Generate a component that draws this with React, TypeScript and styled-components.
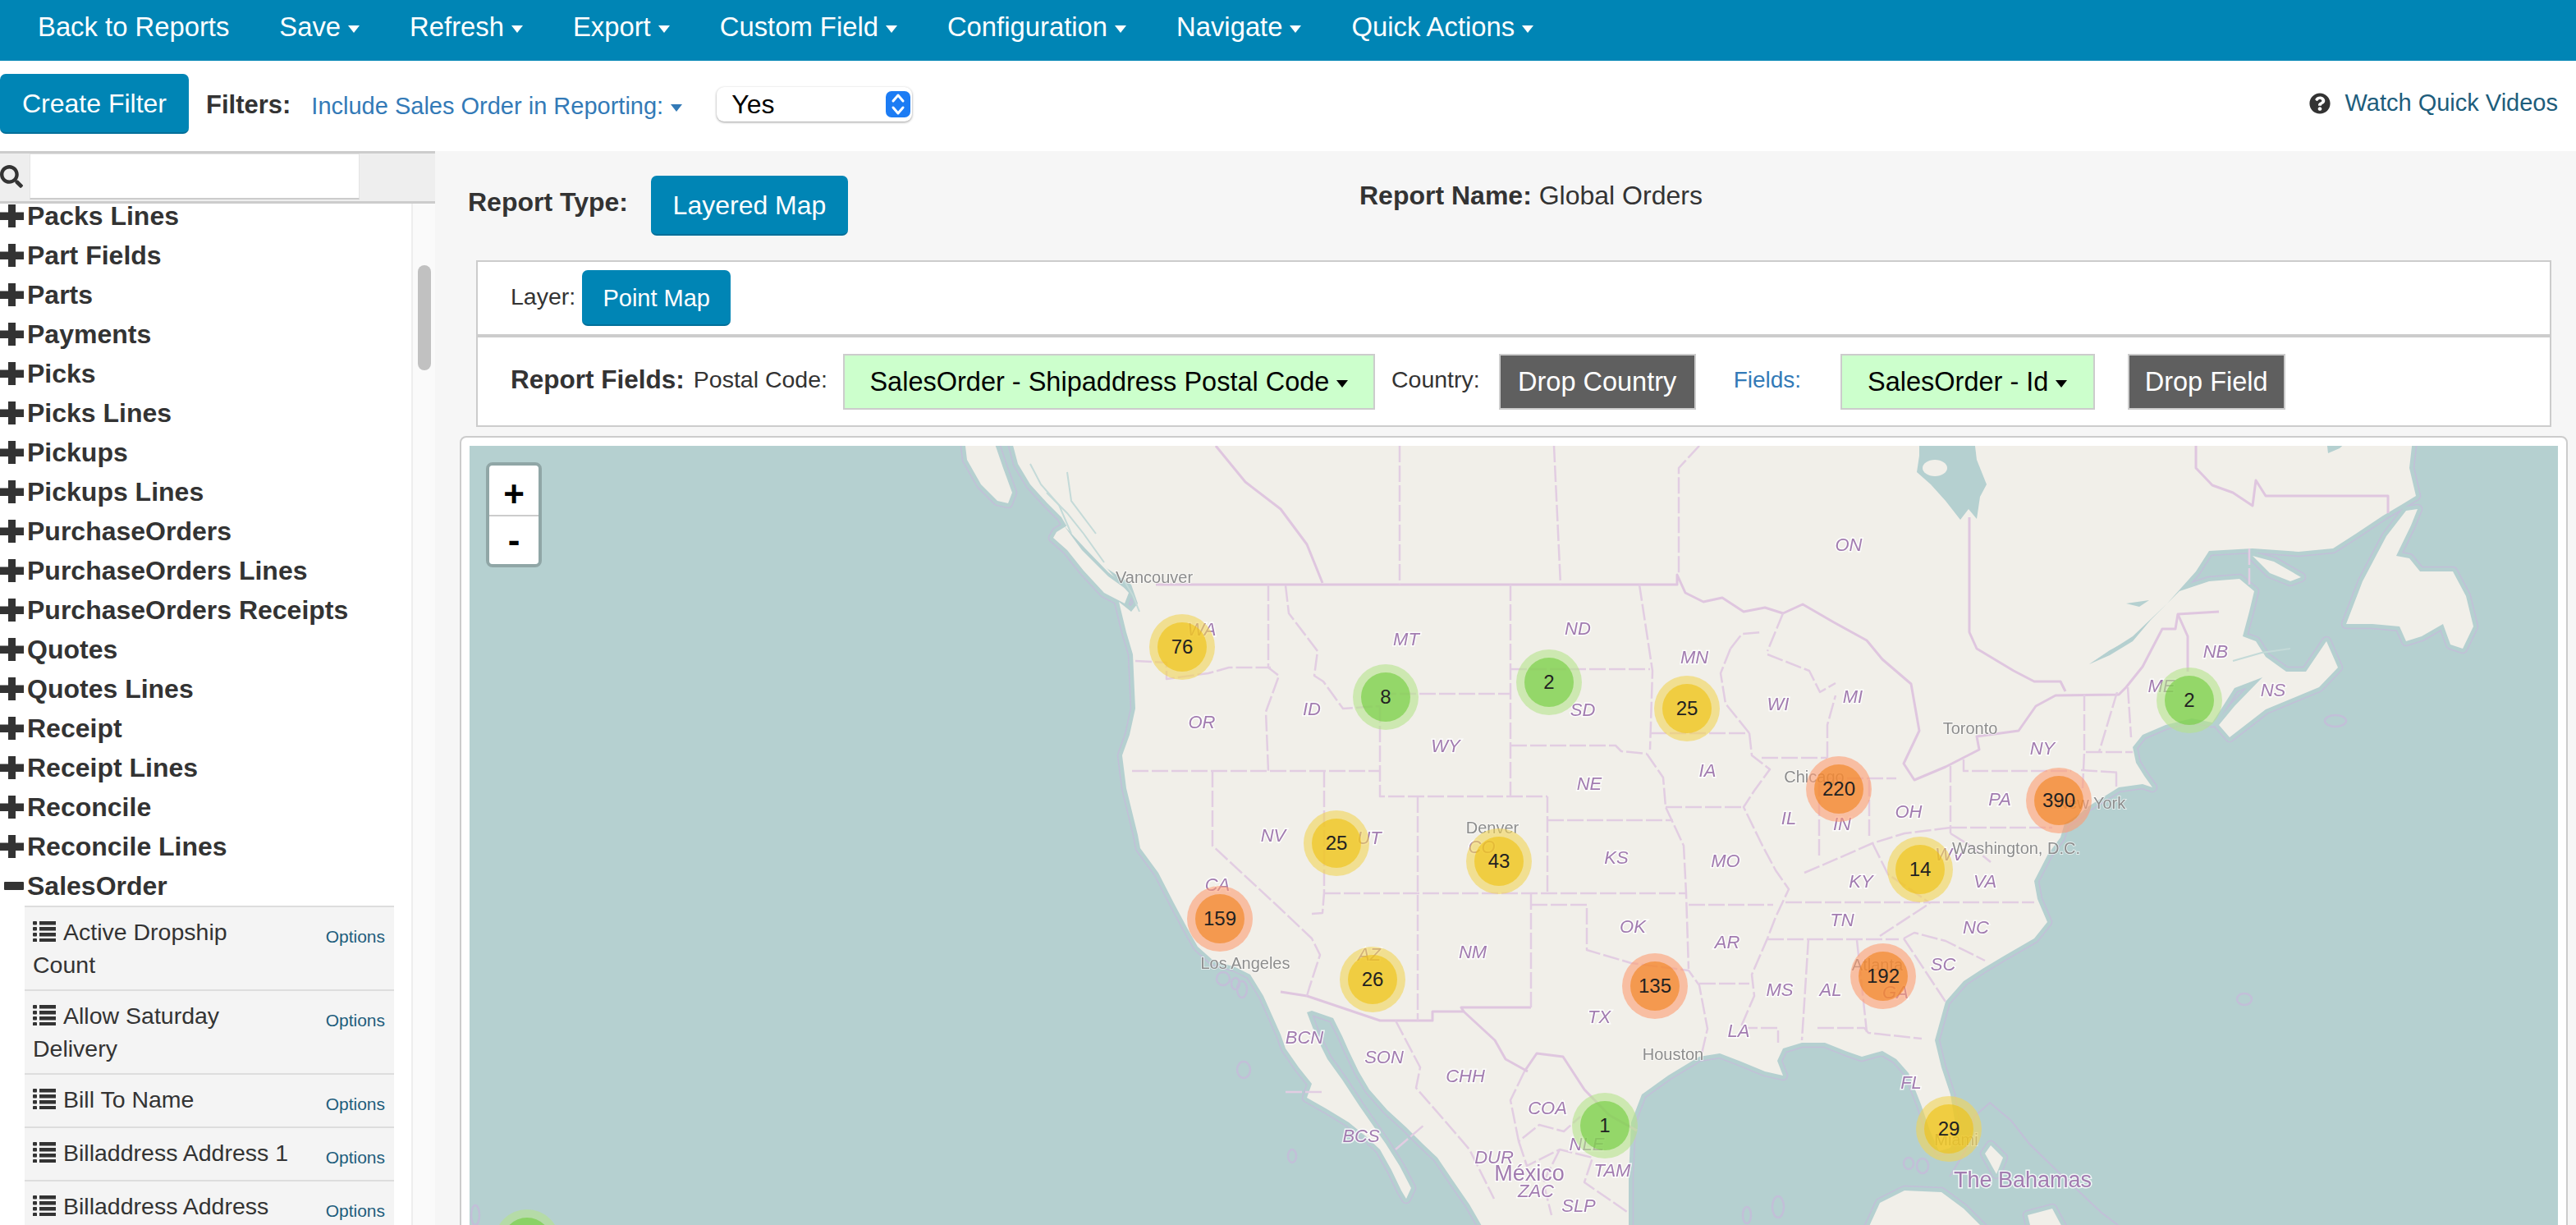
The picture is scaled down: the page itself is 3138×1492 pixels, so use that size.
import React from 'react';
import styled, { createGlobalStyle } from 'styled-components';
import { FaQuestionCircle, FaSearch } from 'react-icons/fa';

const FONT = '"Liberation Sans", Arial, sans-serif';
const BLUE = '#0085b5';

const GlobalStyle = createGlobalStyle`
  html, body {
    margin: 0;
    padding: 0;
    background: #fff;
  }
  body {
    font-family: ${FONT};
    color: #333;
  }
`;

/* map data, in page pixels (viewBox starts at the map corner) */

const LAND = [
  'M1232 500 L1232 535 L1240 565 L1255 590 L1275 612 L1293 630 L1305 650 L1330 680 L1360 700 L1378 712 L1386 735 L1378 745 L1363 733 L1372 770 L1380 797 L1383 863 L1376 895 L1367 920 L1372 960 L1386 1017 L1389 1033 L1411 1063 L1430 1100 L1446 1130 L1459 1153 L1478 1170 L1505 1178 L1523 1187 L1539 1213 L1560 1260 L1566 1277 L1582 1300 L1598 1320 L1592 1337 L1615 1350 L1643 1367 L1665 1385 L1681 1400 L1695 1425 L1707 1450 L1713 1460 L1719 1447 L1705 1420 L1688 1393 L1672 1370 L1656 1347 L1635 1315 L1617 1290 L1603 1262 L1592 1233 L1598 1231 L1624 1240 L1635 1262 L1643 1280 L1655 1305 L1668 1327 L1690 1352 L1713 1373 L1733 1393 L1751 1410 L1770 1438 L1790 1467 L1809 1500 L1984 1500 L1984 1433 L1987 1367 L2000 1333 L2032 1310 L2070 1287 L2095 1283 L2121 1293 L2150 1305 L2172 1310 L2165 1292 L2172 1277 L2195 1270 L2223 1270 L2248 1280 L2268 1287 L2293 1280 L2310 1290 L2325 1307 L2340 1345 L2351 1377 L2362 1402 L2376 1398 L2382 1370 L2376 1333 L2365 1300 L2357 1267 L2370 1220 L2392 1195 L2415 1180 L2440 1165 L2478 1143 L2494 1123 L2482 1095 L2478 1073 L2495 1040 L2510 1020 L2515 1003 L2535 990 L2541 984 L2581 959 L2610 955 L2622 959 L2612 945 L2602 929 L2598 910 L2610 895 L2638 883 L2670 875 L2695 880 L2708 860 L2722 838 L2756 825 L2722 860 L2703 883 L2716 898 L2760 864 L2825 837 L2848 813 L2834 781 L2809 818 L2785 818 L2760 800 L2748 781 L2732 775 L2740 745 L2746 720 L2728 705 L2691 708 L2655 720 L2620 755 L2598 781 L2570 798 L2545 809 L2598 775 L2640 735 L2675 696 L2691 671 L2744 668 L2800 672 L2842 668 L2870 650 L2903 628 L2925 615 L2943 604 L2935 570 L2939 535 L2939 500 Z',
  'M1175 535 L1178 560 L1195 590 L1215 610 L1228 613 L1233 600 L1222 570 L1210 535 Z',
  'M1287 648 L1300 640 L1330 670 L1355 700 L1375 722 L1370 735 L1345 722 L1320 695 L1300 670 L1283 655 Z',
  'M2931 622 L2945 620 L2937 640 L2919 677 L2935 680 L2948 696 L2988 696 L3004 726 L3013 763 L3000 790 L2985 785 L2976 760 L2950 775 L2931 781 L2923 763 L2890 760 L2858 760 L2878 708 L2907 653 Z',
  'M2744 677 L2770 684 L2803 703 L2790 708 L2765 698 Z',
  'M2274 1500 L2290 1465 L2320 1450 L2365 1452 L2392 1472 L2420 1500 Z',
  'M2425 1395 L2440 1410 L2432 1430 L2418 1405 Z',
  'M2470 1480 L2500 1472 L2515 1500 L2475 1500 Z',
];

const ISLETS: [number, number, number, number][] = [
  [2166, 1470, 7, 13], [2128, 1480, 5, 10], [1574, 1408, 5, 8], [1515, 1303, 8, 10],
  [1490, 1192, 8, 8], [1505, 1198, 5, 7], [1513, 1205, 6, 10], [2734, 1217, 9, 7],
  [2845, 878, 13, 7], [579, 1480, 5, 12], [2325, 1417, 6, 7], [2342, 1420, 7, 9],
];

const WATER_PATCHES = [
  'M2338 535 L2338 555 L2335 575 L2352 590 L2370 610 L2388 633 L2398 620 L2408 632 L2412 605 L2420 590 L2408 560 L2405 535 Z',
  'M2834 535 L2836 552 L2850 546 L2862 535 Z',
  'M2590 735 L2618 731 L2606 739 Z',
  'M2545 809 L2570 795 L2598 777 L2570 792 Z',
  'M1296 640 L1322 668 L1350 697 L1372 714 L1378 722 L1350 702 L1318 670 Z',
];

const FJORDS = [
  'M1255 565 L1268 590 L1290 615 L1305 650',
  'M1275 600 L1300 625 L1320 650 L1345 685',
  'M1300 575 L1305 610 L1335 650',
  'M1368 705 L1380 725 L1388 745',
  'M2720 805 L2755 795 L2790 790',
];

const BOLD_BORDERS = [
  'M1408 712 L2043 712 L2043 700 L2053 722 L2075 733 L2098 728 L2124 745 L2150 740 L2172 747 L2196 736 L2234 758 L2274 780 L2293 803 L2328 833 L2338 890 L2319 930 L2332 950 L2370 934 L2411 913 L2408 897 L2459 890 L2480 860 L2504 847 L2581 846 L2590 837 L2610 812 L2634 766 L2650 766 L2653 748 L2703 745',
  'M2653 748 L2665 775 L2665 818',
  'M2675 543 L2675 570 L2695 591 L2720 600 L2744 616 L2748 585 L2760 604 L2909 604 L2909 625',
  'M1861 1305 L1834 1290 L1821 1267 L1783 1232 L1745 1232 L1745 1243 L1681 1243 L1592 1213 L1560 1208',
  'M1857 1305 L1872 1283 L1904 1287 L1930 1327 L1960 1358 L1994 1377',
  'M1783 1232 L1780 1227 L1865 1227',
  'M1481 543 L1517 587 L1560 620 L1592 663 L1611 710',
  'M2399 630 L2399 770 L2408 790 L2453 817 L2478 830 L2510 830 L2516 842',
];

const THIN_BORDERS = [
  'M1705 543 L1705 712', 'M1893 543 L1901 712', 'M2070 543 L2045 570 L2045 700',
  'M2740 668 L2740 714', 'M1383 805 L1421 807 L1421 827 L1472 820 L1497 813 L1548 813',
  'M1545 712 L1545 813 L1558 823 L1542 867 L1545 939', 'M1379 939 L1681 939',
  'M1477 939 L1477 1030 L1560 1107 L1598 1143 L1608 1163 L1595 1203 L1592 1213',
  'M1613 939 L1613 1087 L1611 1112 L1598 1113', 'M1613 1088 L2054 1088', 'M1727 970 L1727 1243',
  'M1566 713 L1570 747 L1605 793 L1601 823 L1612 830 L1636 863 L1681 860',
  'M1681 860 L1681 970 L1885 970', 'M1681 845 L1840 845', 'M1840 712 L1840 970',
  'M1840 815 L2010 815', 'M1840 908 L1968 908 L1975 915 L2006 918',
  'M1997 712 L2013 817 L2010 913', 'M2010 893 L2131 893', 'M1885 970 L1885 1088',
  'M1885 999 L2038 999', 'M2006 918 L2026 947 L2029 983 L2051 1030 L2054 1088 L2057 1180',
  'M2029 983 L2124 983', 'M2131 893 L2134 920 L2156 937 L2137 963 L2124 983 L2147 1030 L2163 1060 L2179 1083 L2163 1117 L2153 1143 L2134 1187 L2137 1213 L2121 1250',
  'M2108 790 L2096 820 L2102 857 L2131 893', 'M2146 923 L2226 923', 'M2153 797 L2204 817 L2217 843 L2236 832',
  'M2226 923 L2226 883 L2236 847', 'M2172 747 L2153 793', 'M2108 790 L2122 772 L2147 770',
  'M2216 950 L2216 1043', 'M2226 948 L2310 948', 'M2277 950 L2277 1020', 'M2376 933 L2376 1015',
  'M2392 925 L2392 939 L2523 939', 'M2376 1008 L2500 1008', 'M2057 1102 L2160 1102',
  'M2175 1099 L2478 1099', 'M2198 1063 L2240 1045 L2281 1027 L2320 1015 L2376 1008',
  'M2281 1027 L2300 1065 L2330 1085 L2351 1100', 'M2376 1015 L2400 1030 L2425 1050',
  'M1865 1088 L1865 1227', 'M1865 1102 L1933 1102 L1933 1157 L1987 1173 L2057 1182 L2070 1200 L2080 1253 L2073 1283',
  'M2070 1198 L2131 1198', 'M2121 1252 L2166 1252 L2166 1270', 'M2203 1143 L2195 1267',
  'M2153 1144 L2313 1144', 'M2262 1145 L2274 1257', 'M2214 1252 L2271 1252 L2276 1258 L2341 1265',
  'M2319 1143 L2370 1220', 'M2319 1143 L2332 1136 L2370 1146 L2418 1170', 'M2290 1140 L2351 1100',
  'M2539 846 L2539 916 L2537 960', 'M2541 916 L2598 916', 'M2535 938 L2583 941',
  'M2579 843 L2557 916', 'M2592 837 L2596 898', 'M2578 941 L2578 958',
  'M1566 1330 L1612 1330', 'M1700 1243 L1730 1300 L1725 1325 L1760 1365 L1790 1400 L1820 1460',
  'M1857 1305 L1840 1340 L1850 1390 L1875 1370 L1905 1378 L1925 1360', 'M1850 1390 L1860 1420 L1900 1400 L1940 1410 L1930 1440 L1985 1478',
  'M1900 1400 L1880 1440 L1890 1480', 'M1700 1400 L1735 1370',
];

type MapLabel = [string, number, number];

const STATE_LABELS: MapLabel[] = [
  ['WA', 1464, 766], ['OR', 1464, 879], ['ON', 2252, 663], ['MT', 1713, 778], ['ND', 1922, 765],
  ['MN', 2064, 800], ['ID', 1598, 863], ['SD', 1928, 864], ['WY', 1761, 908], ['WI', 2166, 857],
  ['MI', 2257, 848], ['IA', 2080, 938], ['NE', 1936, 954], ['NY', 2488, 911], ['PA', 2436, 973],
  ['OH', 2325, 988], ['IL', 2179, 996], ['IN', 2244, 1003], ['UT', 1668, 1020], ['CO', 1805, 1031],
  ['KS', 1969, 1044], ['MO', 2102, 1048], ['WV', 2375, 1040], ['KY', 2267, 1073], ['VA', 2418, 1073],
  ['OK', 1989, 1128], ['TN', 2244, 1120], ['NC', 2407, 1129], ['NM', 1794, 1159], ['AR', 2104, 1147],
  ['AZ', 1668, 1162], ['SC', 2367, 1174], ['GA', 2309, 1208], ['MS', 2168, 1205], ['AL', 2230, 1205],
  ['TX', 1948, 1238], ['LA', 2118, 1255], ['BCN', 1589, 1263], ['SON', 1686, 1287], ['CHH', 1785, 1310],
  ['FL', 2328, 1318], ['COA', 1885, 1349], ['NLE', 1933, 1393], ['BCS', 1658, 1383], ['DUR', 1820, 1409],
  ['TAM', 1964, 1425], ['ZAC', 1871, 1450], ['SLP', 1923, 1468], ['CA', 1483, 1077], ['NV', 1551, 1017],
  ['NB', 2699, 793], ['NS', 2769, 840], ['ME', 2633, 835],
];

const CITY_LABELS: MapLabel[] = [
  ['Vancouver', 1406, 703], ['Toronto', 2400, 887], ['Chicago', 2210, 946], ['Denver', 1818, 1008],
  ['Washington, D.C.', 2456, 1033], ['Atlanta', 2287, 1175], ['Houston', 2038, 1284], ['Los Angeles', 1517, 1173],
  ['New York', 2547, 978], ['Miami', 2383, 1388],
];

const BIG_LABELS: MapLabel[] = [
  ['México', 1863, 1428], ['The Bahamas', 2464, 1436],
];

type Level = 'small' | 'medium' | 'large';

const CLUSTERS: { n?: number; x: number; y: number; level: Level }[] = [
  { n: 76, x: 1440, y: 788, level: 'medium' },
  { n: 8, x: 1688, y: 849, level: 'small' },
  { n: 2, x: 1887, y: 831, level: 'small' },
  { n: 25, x: 2055, y: 863, level: 'medium' },
  { n: 2, x: 2667, y: 853, level: 'small' },
  { n: 220, x: 2240, y: 961, level: 'large' },
  { n: 390, x: 2508, y: 975, level: 'large' },
  { n: 25, x: 1628, y: 1027, level: 'medium' },
  { n: 43, x: 1826, y: 1049, level: 'medium' },
  { n: 14, x: 2339, y: 1059, level: 'medium' },
  { n: 159, x: 1486, y: 1119, level: 'large' },
  { n: 26, x: 1672, y: 1193, level: 'medium' },
  { n: 135, x: 2016, y: 1201, level: 'large' },
  { n: 192, x: 2294, y: 1189, level: 'large' },
  { n: 1, x: 1955, y: 1371, level: 'small' },
  { n: 29, x: 2374, y: 1375, level: 'medium' },
  { x: 642, y: 1513, level: 'small' },
];

const CLUSTER_COLORS: Record<Level, [string, string]> = {
  small: ['rgba(181, 226, 140, 0.6)', 'rgba(110, 204, 57, 0.6)'],
  medium: ['rgba(241, 211, 87, 0.6)', 'rgba(240, 194, 12, 0.6)'],
  large: ['rgba(253, 156, 115, 0.6)', 'rgba(241, 128, 23, 0.6)'],
};

const MAP_LEFT = 572;
const MAP_TOP = 543;

const NAV_ITEMS = ['Save', 'Refresh', 'Export', 'Custom Field', 'Configuration', 'Navigate', 'Quick Actions'];

const TREE_ITEMS = [
  'Packs Lines', 'Part Fields', 'Parts', 'Payments', 'Picks', 'Picks Lines', 'Pickups', 'Pickups Lines',
  'PurchaseOrders', 'PurchaseOrders Lines', 'PurchaseOrders Receipts', 'Quotes', 'Quotes Lines', 'Receipt',
  'Receipt Lines', 'Reconcile', 'Reconcile Lines',
];

const SALES_FIELDS = [
  'Active Dropship\nCount', 'Allow Saturday\nDelivery', 'Bill To Name', 'Billaddress Address 1', 'Billaddress Address',
];

const PlusIcon = () => (
  <svg width="29" height="28" viewBox="0 0 29 28" fill="#333">
    <path d="M10 0h9v9.500h10v9.500H19V28h-9V19H0V9.500h10z" />
  </svg>
);

const MinusIcon = () => (
  <svg width="29" height="28" viewBox="0 0 29 28" fill="#333">
    <rect x="5" y="9" width="24" height="10" rx="1" />
  </svg>
);

const ListIcon = () => (
  <svg width="28" height="25" viewBox="0 0 28 25" fill="#333">
    {[0, 7, 14, 21].map((y) => (
      <g key={y}>
        <rect x="0" y={y} width="5" height="4.500" rx="1" />
        <rect x="8" y={y} width="20" height="4.500" />
      </g>
    ))}
  </svg>
);

const MapDrawing = () => (
  <MapSvg viewBox={`${MAP_LEFT} ${MAP_TOP} 2544 949`}>
    <g fill="none" stroke="#c2bfd8" strokeWidth="12.5" strokeLinejoin="round">
      {LAND.map((d) => <path key={d} d={d} />)}
      {ISLETS.map(([x, y, rx, ry]) => <ellipse key={`${x}-${y}`} cx={x} cy={y} rx={rx} ry={ry} strokeWidth="2.5" />)}
    </g>
    <g fill="none" stroke="#b5d0d0" strokeWidth="9.500" strokeLinejoin="round">
      {LAND.map((d) => <path key={d} d={d} />)}
    </g>
    <path d="M2375 1433 L2395 1400 L2405 1360 L2424 1343 L2450 1365 L2472 1393 L2510 1430 L2560 1477 L2580 1492" fill="none" stroke="#c2bfd8" strokeWidth="2" />
    <g fill="#f1efe9">
      {LAND.map((d) => <path key={d} d={d} />)}
    </g>
    <g fill="#b5d0d0">
      {WATER_PATCHES.map((d) => <path key={d} d={d} />)}
      <ellipse cx="2357" cy="570" rx="15" ry="10" fill="#f1efe9" />
    </g>
    <g fill="none" stroke="#c4dad8" strokeWidth="2">
      {FJORDS.map((d) => <path key={d} d={d} />)}
    </g>
    <g fill="none" stroke="#dfc6df" strokeWidth="3" strokeLinejoin="round">
      {BOLD_BORDERS.map((d) => <path key={d} d={d} />)}
    </g>
    <g fill="none" stroke="#e2cde2" strokeWidth="2.5" strokeDasharray="20 4" strokeLinejoin="round">
      {THIN_BORDERS.map((d) => <path key={d} d={d} />)}
    </g>
    {STATE_LABELS.map(([t, x, y]) => <StateText key={t} x={x} y={y + 8}>{t}</StateText>)}
    {BIG_LABELS.map(([t, x, y]) => <BigText key={t} x={x} y={y + 10}>{t}</BigText>)}
    {CITY_LABELS.map(([t, x, y]) => <CityText key={t} x={x} y={y + 7}>{t}</CityText>)}
  </MapSvg>
);

const App = () => {
  return (
    <Page>
      <GlobalStyle />
      <NavBar>
        <NavItem>Back to Reports</NavItem>
        {NAV_ITEMS.map((item) => (
          <NavItem key={item}>
            {item}
            <Caret $color="#fff" />
          </NavItem>
        ))}
      </NavBar>

      <FilterBar>
        <CreateButton>Create Filter</CreateButton>
        <FilterTitle>Filters:</FilterTitle>
        <FilterLink>
          Include Sales Order in Reporting:
          <Caret $color="#337ab7" />
        </FilterLink>
        <SelectBox>
          <SelectValue>Yes</SelectValue>
          <SelectArrows>
            <svg width="22" height="30" viewBox="0 0 22 30" fill="none" stroke="#fff" strokeWidth="3" strokeLinecap="round" strokeLinejoin="round">
              <path d="M5 11 L11 4 L17 11" />
              <path d="M5 19 L11 26 L17 19" />
            </svg>
          </SelectArrows>
        </SelectBox>
        <VideoLink>
          <FaQuestionCircle size={26} color="#333" />
          <span>Watch Quick Videos</span>
        </VideoLink>
      </FilterBar>

      <Body>
        <Sidebar>
          <SearchRow>
            <SearchIcon><FaSearch size={28} color="#333" /></SearchIcon>
            <SearchInput />
          </SearchRow>
          <SidebarBody>
            <Tree>
              <TreeScroll>
                {TREE_ITEMS.map((item) => (
                  <TreeRow key={item}>
                    <PlusIcon />
                    {item}
                  </TreeRow>
                ))}
                <TreeRow>
                  <MinusIcon />
                  SalesOrder
                </TreeRow>
                <FieldList>
                  {SALES_FIELDS.map((field) => (
                    <FieldRow key={field}>
                      <FieldName>
                        <ListIcon />
                        {field}
                      </FieldName>
                      <OptionsLink>Options</OptionsLink>
                    </FieldRow>
                  ))}
                </FieldList>
              </TreeScroll>
            </Tree>
            <ScrollTrack>
              <ScrollThumb />
            </ScrollTrack>
          </SidebarBody>
        </Sidebar>

        <Main>
          <ReportHead>
            <ReportType>
              <strong>Report Type:</strong>
              <LayeredButton>Layered Map</LayeredButton>
            </ReportType>
            <ReportName>
              <strong>Report Name:</strong> Global Orders
            </ReportName>
          </ReportHead>

          <ConfigPanel>
            <LayerRow>
              <SmallLabel>Layer:</SmallLabel>
              <PointButton>Point Map</PointButton>
            </LayerRow>
            <FieldsRow>
              <FieldsTitle>Report Fields:</FieldsTitle>
              <SmallLabel>Postal Code:</SmallLabel>
              <DropPill $width={648} $right={20}>
                SalesOrder - Shipaddress Postal Code
                <Caret $color="#000" />
              </DropPill>
              <SmallLabel>Country:</SmallLabel>
              <DropTarget $width={240} $left={23}>Drop Country</DropTarget>
              <FieldsLink>Fields:</FieldsLink>
              <DropPill $width={310} $right={0}>
                SalesOrder - Id
                <Caret $color="#000" />
              </DropPill>
              <DropTarget $width={192} $left={40}>Drop Field</DropTarget>
            </FieldsRow>
          </ConfigPanel>

          <MapCard>
            <MapCanvas>
              <MapDrawing />
              <ZoomBar>
                <ZoomButton $drop={10}>+</ZoomButton>
                <ZoomButton $drop={0}>-</ZoomButton>
              </ZoomBar>
              {CLUSTERS.map((c) => (
                <Cluster key={`${c.x}-${c.y}`} $x={c.x - MAP_LEFT} $y={c.y - MAP_TOP} $bg={CLUSTER_COLORS[c.level][0]}>
                  <ClusterCore $bg={CLUSTER_COLORS[c.level][1]}>{c.n}</ClusterCore>
                </Cluster>
              ))}
            </MapCanvas>
          </MapCard>
        </Main>
      </Body>
    </Page>
  );
};

export default App;

const Page = styled.div`
  display: flex;
  flex-direction: column;
  width: 3138px;
  height: 1492px;
  overflow: hidden;
`;

const NavBar = styled.div`
  display: flex;
  align-items: center;
  gap: 61px;
  height: 74px;
  flex: none;
  padding: 0 0 8px 46px;
  box-sizing: border-box;
  background: ${BLUE};
`;

const NavItem = styled.div`
  display: flex;
  align-items: center;
  color: #fff;
  font-size: 32.800px;
  white-space: nowrap;
`;

const Caret = styled.span<{ $color: string }>`
  display: inline-block;
  margin-left: 9px;
  margin-top: 4px;
  border-top: 9px solid ${(p) => p.$color};
  border-left: 7px solid transparent;
  border-right: 7px solid transparent;
`;

const FilterBar = styled.div`
  display: flex;
  align-items: center;
  height: 110px;
  flex: none;
  padding: 0 22px 5px 0;
  box-sizing: border-box;
  background: #fff;
`;

const Button = styled.div`
  display: flex;
  align-items: center;
  justify-content: center;
  padding-top: 2px;
  background: ${BLUE};
  border-bottom: 2px solid #006f99;
  border-radius: 7px;
  color: #fff;
  box-sizing: border-box;
`;

const CreateButton = styled(Button)`
  width: 230px;
  height: 73px;
  font-size: 32px;
`;

const FilterTitle = styled.div`
  margin: 2px 0 0 21px;
  font-size: 31px;
  font-weight: bold;
`;

const FilterLink = styled.div`
  display: flex;
  align-items: center;
  width: 450px;
  margin: 6px 0 0 25px;
  color: #337ab7;
  font-size: 29px;
  white-space: nowrap;
`;

const SelectBox = styled.div`
  position: relative;
  display: flex;
  align-items: center;
  width: 238px;
  height: 42px;
  margin-left: 44px;
  padding-left: 18px;
  box-sizing: border-box;
  border-radius: 9px;
  background: #fff;
  box-shadow: 0 1px 3px rgba(0, 0, 0, 0.4);
  color: #000;
  font-size: 32px;
`;

const SelectValue = styled.span`
  margin-top: 2px;
`;

const SelectArrows = styled.div`
  position: absolute;
  right: 2px;
  top: 5px;
  display: flex;
  align-items: center;
  justify-content: center;
  width: 30px;
  height: 32px;
  border-radius: 7px;
  background: #1c7cf4;
`;

const VideoLink = styled.div`
  display: flex;
  align-items: center;
  gap: 18px;
  margin: -2px 0 0 auto;
  color: #1d5d7c;
  font-size: 29px;
  white-space: nowrap;
`;

const Body = styled.div`
  display: flex;
  flex: 1;
  min-height: 0;
`;

const Sidebar = styled.div`
  display: flex;
  flex-direction: column;
  width: 530px;
  flex: none;
  border-top: 3px solid #ccc;
  box-sizing: border-box;
  background: #fff;
`;

const SearchRow = styled.div`
  display: flex;
  height: 58px;
  flex: none;
  background: #eee;
  border-bottom: 3px solid #ccc;
  box-sizing: content-box;
`;

const SearchIcon = styled.div`
  display: flex;
  align-items: center;
  width: 36px;
  flex: none;
  padding-bottom: 2px;
  box-sizing: border-box;
`;

const SearchInput = styled.div`
  width: 402px;
  height: 56px;
  box-sizing: border-box;
  background: #fff;
  border: 1px solid #e4e4e4;
  border-bottom: 2px solid #ccc;
`;

const SidebarBody = styled.div`
  display: flex;
  flex: 1;
  min-height: 0;
`;

const Tree = styled.div`
  width: 501px;
  flex: none;
  overflow: hidden;
  background: #fff;
`;

const TreeScroll = styled.div`
  margin-top: -9px;
`;

const TreeRow = styled.div`
  display: flex;
  align-items: center;
  gap: 4px;
  height: 48px;
  font-size: 32px;
  font-weight: bold;
  color: #333;
  white-space: nowrap;
`;

const FieldList = styled.div`
  width: 450px;
  margin: 0 0 0 30px;
`;

const FieldRow = styled.div`
  display: flex;
  justify-content: space-between;
  min-height: 43px;
  padding: 10px 11px 10px 10px;
  background: #f4f4f4;
  border-top: 2px solid #ddd;
`;

const FieldName = styled.div`
  width: 345px;
  font-size: 28.500px;
  line-height: 40px;
  color: #333;
  white-space: pre-line;
  svg {
    margin-right: 9px;
    vertical-align: -2px;
  }
`;

const OptionsLink = styled.div`
  margin-top: 14px;
  color: #1d5d7c;
  font-size: 21px;
  line-height: 24px;
`;

const ScrollTrack = styled.div`
  flex: 1;
  padding-top: 75px;
  background: #fafafa;
  border-left: 2px solid #eee;
`;

const ScrollThumb = styled.div`
  width: 16px;
  height: 128px;
  margin-left: 6px;
  border-radius: 8px;
  background: #c1c1c1;
`;

const Main = styled.div`
  flex: 1;
  min-width: 0;
  background: #f6f6f6;
`;

const ReportHead = styled.div`
  display: flex;
  align-items: flex-start;
  height: 133px;
  padding-left: 40px;
  box-sizing: border-box;
`;

const ReportType = styled.div`
  display: flex;
  align-items: flex-start;
  gap: 28px;
  width: 1086px;
  padding-top: 30px;
  font-size: 32px;
  strong {
    margin-top: 14px;
  }
`;

const LayeredButton = styled(Button)`
  width: 240px;
  height: 73px;
  font-size: 32px;
`;

const ReportName = styled.div`
  padding-top: 36px;
  font-size: 32px;
  white-space: nowrap;
`;

const ConfigPanel = styled.div`
  width: 2528px;
  height: 203px;
  margin-left: 50px;
  box-sizing: border-box;
  border: 2px solid #ccc;
  background: #fff;
`;

const LayerRow = styled.div`
  display: flex;
  align-items: center;
  height: 92px;
  padding-left: 40px;
  box-sizing: border-box;
  border-bottom: 4px solid #ccc;
`;

const SmallLabel = styled.div`
  margin-top: -4px;
  font-size: 28.500px;
  white-space: nowrap;
`;

const PointButton = styled(Button)`
  width: 181px;
  height: 68px;
  margin-left: 8px;
  font-size: 29px;
`;

const FieldsRow = styled.div`
  display: flex;
  align-items: center;
  height: 107px;
  padding-left: 40px;
  box-sizing: border-box;
`;

const FieldsTitle = styled.div`
  margin: -4px 11px 0 0;
  font-size: 31.500px;
  font-weight: bold;
  white-space: nowrap;
`;

const DropPill = styled.div<{ $width: number; $right: number }>`
  display: flex;
  align-items: center;
  justify-content: center;
  width: ${(p) => p.$width}px;
  height: 68px;
  padding-top: 2px;
  margin: 0 ${(p) => p.$right}px 0 19px;
  box-sizing: border-box;
  background: #ccffcc;
  border: 2px solid #ccc;
  color: #000;
  font-size: 32.500px;
  white-space: nowrap;
`;

const DropTarget = styled.div<{ $width: number; $left: number }>`
  display: flex;
  align-items: center;
  justify-content: center;
  width: ${(p) => p.$width}px;
  height: 68px;
  padding-top: 2px;
  margin-left: ${(p) => p.$left}px;
  box-sizing: border-box;
  background: #5f5f5f;
  border: 2px solid #ccc;
  color: #fff;
  font-size: 32.500px;
  white-space: nowrap;
`;

const FieldsLink = styled.div`
  width: 84px;
  margin: -4px 27px 0 46px;
  color: #337ab7;
  font-size: 28px;
`;

const MapCard = styled.div`
  width: 2568px;
  height: 975px;
  margin: 11px 0 0 30px;
  padding: 10px 10px 0;
  box-sizing: border-box;
  border: 2px solid #ccc;
  border-radius: 8px;
  background: #fff;
`;

const MapCanvas = styled.div`
  position: relative;
  width: 2544px;
  height: 949px;
  overflow: hidden;
  background: #b5d0d0;
`;

const MapSvg = styled.svg`
  display: block;
  width: 2544px;
  height: 949px;
  filter: blur(0.6px);
`;

const StateText = styled.text`
  font-family: "Liberation Sans", Arial, sans-serif;
  font-size: 22px;
  font-style: italic;
  text-anchor: middle;
  fill: #a27cb0;
  stroke: #fff;
  stroke-width: 3px;
  stroke-opacity: 0.8;
  paint-order: stroke;
`;

const BigText = styled(StateText)`
  font-size: 27px;
  font-style: normal;
`;

const CityText = styled.text`
  font-family: "Liberation Sans", Arial, sans-serif;
  font-size: 20px;
  text-anchor: middle;
  fill: #8d8d8d;
  stroke: #fff;
  stroke-width: 2px;
  stroke-opacity: 0.6;
  paint-order: stroke;
`;

const ZoomBar = styled.div`
  position: absolute;
  left: 20px;
  top: 20px;
  width: 60px;
  border: 4px solid rgba(0, 0, 0, 0.2);
  background-clip: padding-box;
  border-radius: 8px;
  overflow: hidden;
`;

const ZoomButton = styled.div<{ $drop: number }>`
  display: flex;
  align-items: center;
  justify-content: center;
  height: 60px;
  padding-top: ${(p) => p.$drop}px;
  box-sizing: border-box;
  background: #fff;
  color: #000;
  font-family: "Liberation Sans", Arial, sans-serif;
  font-size: 44px;
  font-weight: bold;
  & + & {
    border-top: 2px solid #ccc;
  }
`;

const Cluster = styled.div<{ $x: number; $y: number; $bg: string }>`
  position: absolute;
  left: ${(p) => p.$x - 40}px;
  top: ${(p) => p.$y - 40}px;
  display: flex;
  align-items: center;
  justify-content: center;
  width: 80px;
  height: 80px;
  border-radius: 50%;
  background: ${(p) => p.$bg};
`;

const ClusterCore = styled.div<{ $bg: string }>`
  display: flex;
  align-items: center;
  justify-content: center;
  width: 60px;
  height: 60px;
  border-radius: 50%;
  background: ${(p) => p.$bg};
  color: #222;
  font-size: 24px;
`;
